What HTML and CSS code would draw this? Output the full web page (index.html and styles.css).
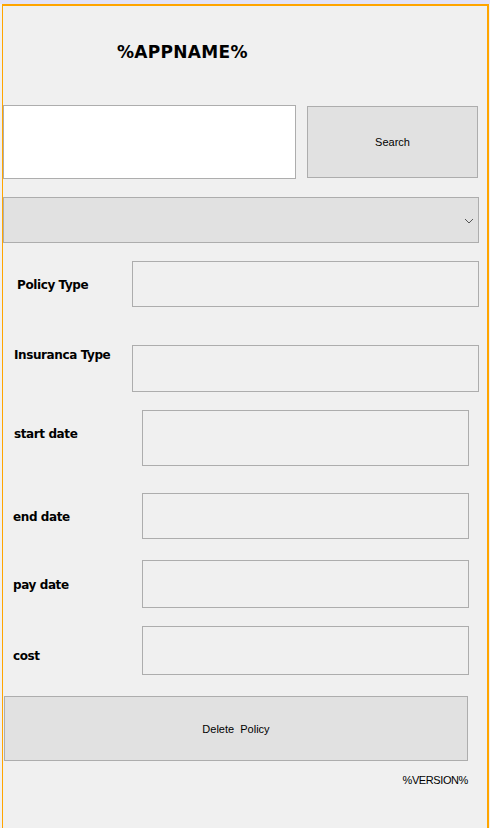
FILE: index.html
```html
<!DOCTYPE html>
<html>
<head>
<meta charset="utf-8">
<link rel="stylesheet" href="styles.css">
</head>
<body>
<div class="topstrip"></div>
<div class="frame">
  <div class="header"><span class="title">%APPNAME%</span></div>
  <div class="search-row">
    <div class="search-input"></div>
    <div class="btn search-btn">Search</div>
  </div>
  <div class="dropdown">
    <svg class="chev" width="10" height="6" viewBox="0 0 10 6"><path d="M1 1 L5 5 L9 1" fill="none" stroke="#555" stroke-width="1"/></svg>
  </div>

  <div class="row r1">
    <div class="label l1">Policy Type</div>
    <div class="box b-wide h46"></div>
  </div>
  <div class="row r2">
    <div class="label l2">Insuranca Type</div>
    <div class="box b-wide h47"></div>
  </div>
  <div class="row r3">
    <div class="label l3">start date</div>
    <div class="box b-narrow h56"></div>
  </div>
  <div class="row r4">
    <div class="label l4">end date</div>
    <div class="box b-narrow h46"></div>
  </div>
  <div class="row r5">
    <div class="label l5">pay date</div>
    <div class="box b-narrow h48"></div>
  </div>
  <div class="row r6">
    <div class="label l6">cost</div>
    <div class="box b-narrow h49"></div>
  </div>

  <div class="btn delete-btn">Delete&nbsp; Policy</div>
  <div class="version">%VERSION%</div>
</div>
</body>
</html>
```
FILE: styles.css
```css
html, body {
  margin: 0;
  padding: 0;
  background: #f0f0f0;
  height: 828px;
  overflow: hidden;
}
.topstrip {
  height: 4px;
  background: #e3e3f8;
}
.frame {
  margin: 0 1px 0 2px;
  border: 2px solid #ffa500;
  border-left-width: 1px;
  border-bottom: none;
  background: #f0f0f0;
  height: 830px;
  box-sizing: border-box;
}
.header {
  height: 99px;
  padding: 36px 0 0 114px;
  box-sizing: border-box;
}
.title {
  font-family: "DejaVu Sans", sans-serif;
  font-weight: bold;
  font-size: 17px;
  line-height: 20px;
  letter-spacing: 0.3px;
  color: #000;
}
.search-row {
  display: flex;
  align-items: center;
  height: 74px;
}
.search-input {
  width: 293px;
  height: 74px;
  box-sizing: border-box;
  background: #fff;
  border: 1px solid #adadad;
}
.btn {
  background: #e1e1e1;
  border: 1px solid #adadad;
  box-sizing: border-box;
  display: flex;
  align-items: center;
  justify-content: center;
  font-family: "Liberation Sans", Arial, sans-serif;
  font-size: 11px;
  color: #000;
}
.search-btn {
  margin-left: 11px;
  width: 171px;
  height: 72px;
}
.dropdown {
  margin-top: 18px;
  width: 476px;
  height: 46px;
  box-sizing: border-box;
  background: #e1e1e1;
  border: 1px solid #adadad;
  display: flex;
  align-items: center;
  justify-content: flex-end;
  padding-right: 4px;
}
.chev { display: block; margin-top: 1px; }

.row {
  display: flex;
  align-items: flex-start;
}
.label {
  font-family: "DejaVu Sans", sans-serif;
  font-weight: bold;
  font-size: 12px;
  letter-spacing: -0.4px;
  line-height: 14px;
  color: #000;
  box-sizing: border-box;
  flex: none;
}
.box {
  box-sizing: border-box;
  border: 1px solid #adadad;
  background: #f0f0f0;
  flex: none;
}
.b-wide { width: 347px; }
.b-narrow { width: 327px; }
.h46 { height: 46px; }
.h47 { height: 47px; }
.h48 { height: 48px; }
.h49 { height: 49px; }
.h56 { height: 56px; }

.r1 { margin-top: 18px; }
.r2 { margin-top: 38px; }
.r3 { margin-top: 18px; }
.r4 { margin-top: 27px; }
.r5 { margin-top: 21px; }
.r6 { margin-top: 18px; }

.l1 { width: 129px; padding: 17px 0 0 14px; }
.l2 { width: 129px; padding: 3px 0 0 11px; }
.l3 { width: 139px; padding: 17px 0 0 11px; }
.l4 { width: 139px; padding: 17px 0 0 10px; }
.l5 { width: 139px; padding: 18px 0 0 10px; }
.l6 { width: 139px; padding: 23px 0 0 10px; }

.delete-btn {
  margin-top: 21px;
  margin-left: 1px;
  width: 464px;
  height: 65px;
}
.version {
  margin-top: 12px;
  width: 465px;
  text-align: right;
  font-family: "Liberation Sans", Arial, sans-serif;
  font-size: 11px;
  letter-spacing: -0.4px;
  line-height: 14px;
  color: #000;
}
```
